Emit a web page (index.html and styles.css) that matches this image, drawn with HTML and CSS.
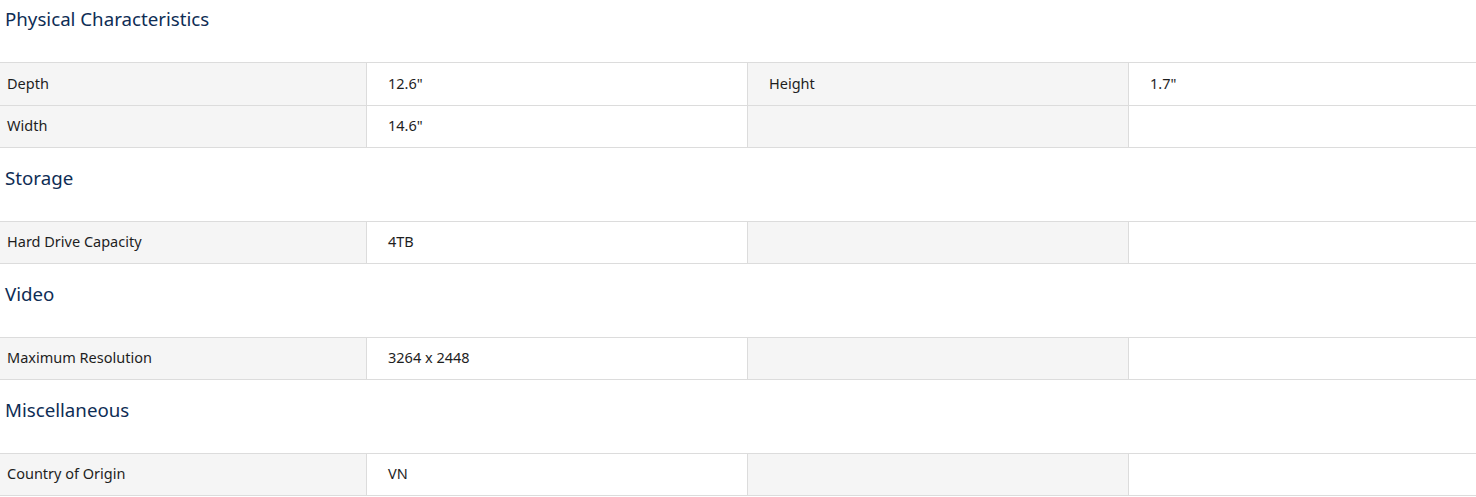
FILE: index.html
```html
<!DOCTYPE html>
<html>
<head>
<meta charset="utf-8">
<link rel="stylesheet" href="styles.css">
</head>
<body>
<section class="group">
  <h3 class="group-title">Physical Characteristics</h3>
  <div class="spec-table">
    <div class="cell label first-row">Depth</div><div class="cell value first-row">12.6"</div><div class="cell label first-row">Height</div><div class="cell value first-row">1.7"</div>
    <div class="cell label">Width</div><div class="cell value">14.6"</div><div class="cell label"></div><div class="cell value"></div>
  </div>
</section>
<section class="group">
  <h3 class="group-title">Storage</h3>
  <div class="spec-table">
    <div class="cell label">Hard Drive Capacity</div><div class="cell value">4TB</div><div class="cell label"></div><div class="cell value"></div>
  </div>
</section>
<section class="group">
  <h3 class="group-title">Video</h3>
  <div class="spec-table">
    <div class="cell label">Maximum Resolution</div><div class="cell value">3264 x 2448</div><div class="cell label"></div><div class="cell value"></div>
  </div>
</section>
<section class="group">
  <h3 class="group-title">Miscellaneous</h3>
  <div class="spec-table">
    <div class="cell label">Country of Origin</div><div class="cell value">VN</div><div class="cell label"></div><div class="cell value"></div>
  </div>
</section>
</body>
</html>
```
FILE: styles.css
```css
html, body {
  margin: 0;
  padding: 0;
  background: #ffffff;
}
body {
  font-family: "Noto Sans", "Open Sans", sans-serif;
  color: #1e1e1e;
  overflow: hidden;
}
.group-title {
  margin: 0;
  padding: 18px 0 31px 5px;
  height: 24px;
  line-height: 24px;
  font-size: 18.7px;
  font-weight: 400;
  color: #0e2d55;
}
.group:first-child .group-title {
  padding-top: 7px;
}
.spec-table {
  display: grid;
  grid-template-columns: 367px 381px 381px 1fr;
  border-top: 1px solid #dcdcdc;
}
.cell {
  box-sizing: border-box;
  height: 42px;
  line-height: 39px;
  font-size: 14.5px;
  border-bottom: 1px solid #dcdcdc;
  border-right: 1px solid #dcdcdc;
  padding-left: 21px;
  white-space: nowrap;
}
.cell.first-row {
  height: 43px;
  line-height: 40px;
}
.cell:nth-child(4n) {
  border-right: none;
}
.label {
  background: #f5f5f5;
}
.value {
  background: #ffffff;
}
.cell:nth-child(4n+1) {
  padding-left: 7px;
}
```
